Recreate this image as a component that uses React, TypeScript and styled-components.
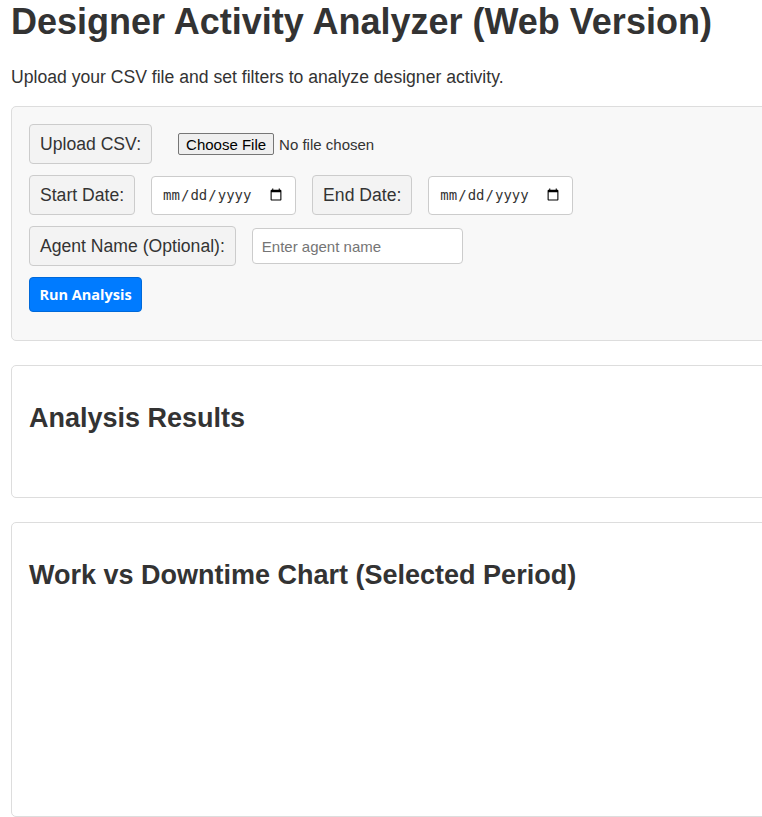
import styled, { createGlobalStyle } from "styled-components";

const GlobalStyle = createGlobalStyle`
  html, body {
    margin: 0;
    padding: 0;
    overflow: hidden;
    background: #fff;
  }
  body {
    font-family: "Liberation Sans", Arial, sans-serif;
    color: #333;
  }
`;

const Page = styled.div`
  padding: 2px 11px 0;
  width: 820px;
`;

const Title = styled.h1`
  margin: 0;
  font-size: 36px;
  line-height: 40px;
  font-weight: bold;
  color: #333;
`;

const Intro = styled.p`
  margin: 25px 0 19px;
  font-size: 17.6px;
  line-height: 20px;
`;

const Panel = styled.section<{ $muted?: boolean }>`
  background: ${({ $muted }) => ($muted ? "#f8f8f8" : "#fff")};
  border: 1px solid #ddd;
  border-radius: 5px;
  padding: 17px;
  margin-bottom: 24px;
`;

const Row = styled.div`
  display: flex;
  align-items: center;
  gap: 16px;
  margin-bottom: 11px;
`;

const FieldLabel = styled.label`
  display: inline-block;
  padding: 9px 10px;
  line-height: 20px;
  font-size: 17.6px;
  background: #f3f3f3;
  border: 1px solid #ccc;
  border-radius: 4px;
  color: #333;
`;

const FileInput = styled.input`
  margin-left: 10px;
  font-family: "Liberation Sans", Arial, sans-serif;
  font-size: 15px;
  color: #333;

  &::file-selector-button {
    font-family: "Liberation Sans", Arial, sans-serif;
    font-size: 15px;
    height: 22px;
    padding: 0 7px;
    margin-right: 5px;
    background: #efefef;
    border: 1px solid #767676;
    border-radius: 2px;
    color: #000;
  }
`;

const DateInput = styled.input`
  box-sizing: border-box;
  width: 145px;
  height: 39px;
  padding: 0 10px;
  font-family: "DejaVu Sans Mono", "Liberation Mono", monospace;
  font-size: 14px;
  color: #333;
  background: #fff;
  border: 1px solid #ccc;
  border-radius: 4px;
`;

const TextInput = styled.input`
  box-sizing: border-box;
  width: 211px;
  height: 36px;
  padding: 0 9px;
  font-family: "Liberation Sans", Arial, sans-serif;
  font-size: 15px;
  color: #333;
  background: #fff;
  border: 1px solid #ccc;
  border-radius: 4px;

  &::placeholder {
    color: #757575;
  }
`;

const RunButton = styled.button`
  display: block;
  margin: 0 0 11px;
  width: 113px;
  height: 35px;
  padding: 0;
  font-family: "Open Sans", "Noto Sans", sans-serif;
  font-size: 14.5px;
  font-weight: bold;
  color: #fff;
  background: #007bff;
  border: 1px solid #0069d9;
  border-radius: 4px;
  cursor: pointer;
`;

const SectionTitle = styled.h2`
  margin: 20px 0 19px;
  font-size: 27px;
  line-height: 31px;
  font-weight: bold;
  color: #333;
`;

const ResultsBody = styled.div`
  min-height: 27px;
`;

const ChartArea = styled.div`
  height: 189px;
`;

export default function App() {
  return (
    <>
      <GlobalStyle />
      <Page>
        <Title>Designer Activity Analyzer (Web Version)</Title>
        <Intro>Upload your CSV file and set filters to analyze designer activity.</Intro>

        <Panel $muted>
          <Row>
            <FieldLabel htmlFor="csv">Upload CSV:</FieldLabel>
            <FileInput id="csv" type="file" accept=".csv" />
          </Row>
          <Row>
            <FieldLabel htmlFor="start">Start Date:</FieldLabel>
            <DateInput id="start" type="date" />
            <FieldLabel htmlFor="end">End Date:</FieldLabel>
            <DateInput id="end" type="date" />
          </Row>
          <Row>
            <FieldLabel htmlFor="agent">Agent Name (Optional):</FieldLabel>
            <TextInput id="agent" type="text" placeholder="Enter agent name" />
          </Row>
          <RunButton type="button">Run Analysis</RunButton>
        </Panel>

        <Panel>
          <SectionTitle>Analysis Results</SectionTitle>
          <ResultsBody />
        </Panel>

        <Panel>
          <SectionTitle>Work vs Downtime Chart (Selected Period)</SectionTitle>
          <ChartArea />
        </Panel>
      </Page>
    </>
  );
}
